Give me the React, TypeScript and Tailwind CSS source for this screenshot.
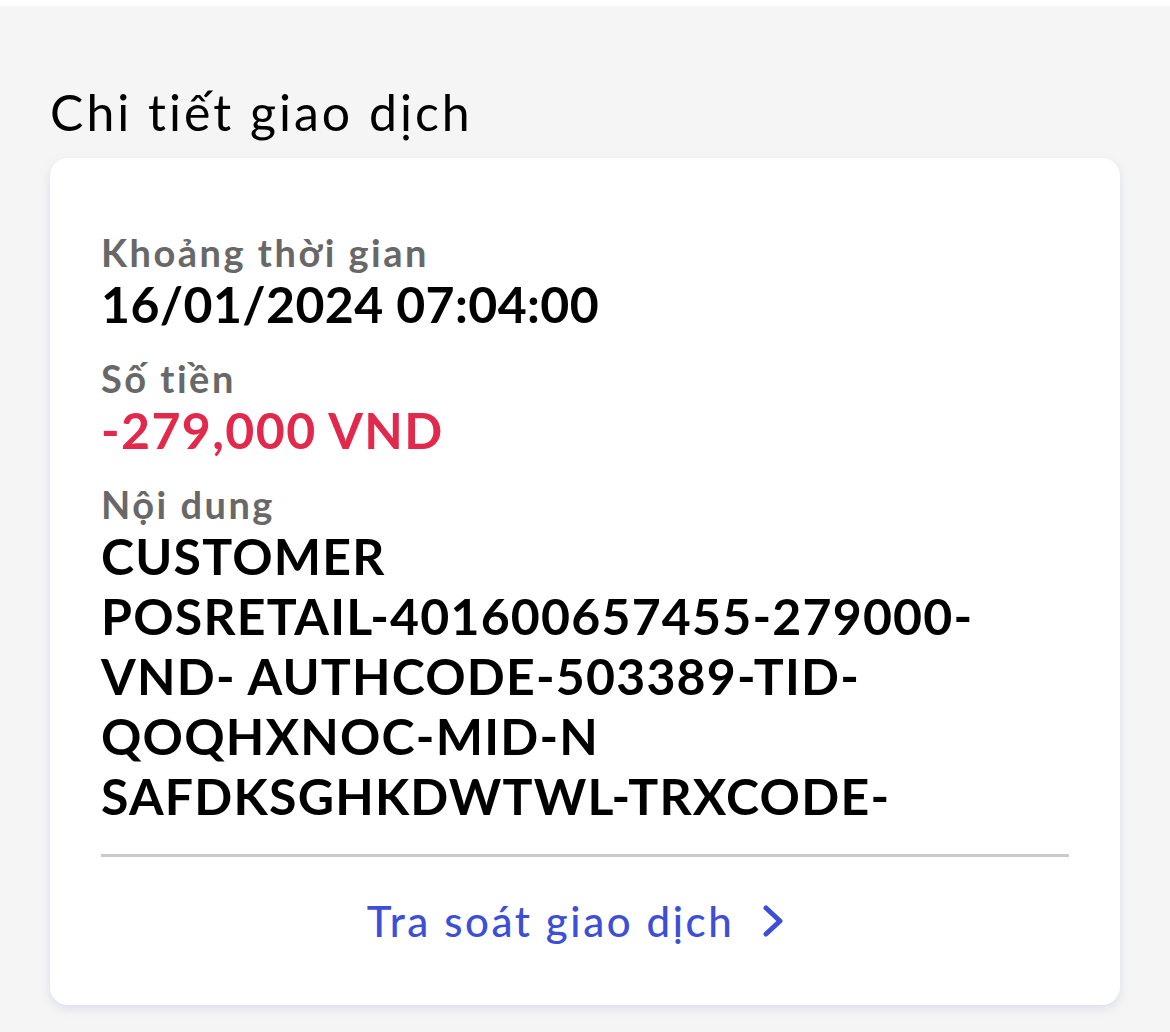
import { FC } from 'react'

const fields = [
  { label: 'Khoảng thời gian', value: '16/01/2024 07:04:00', tone: 'text-black tracking-[0.4px]' },
  { label: 'Số tiền', value: '-279,000 VND', tone: 'text-[#e3294b] tracking-[1.4px]' },
]

const contentLines = [
  'CUSTOMER',
  'POSRETAIL-401600657455-279000-',
  'VND- AUTHCODE-503389-TID-',
  'QOQHXNOC-MID-N',
  'SAFDKSGHKDWTWL-TRXCODE-',
]

const App: FC = () => {
  return (
    <div className="w-[1170px] h-[1032px] bg-[#f5f5f5] border-t-[6px] border-white font-['Lato','Noto_Sans',sans-serif] overflow-hidden">
      {/* Section title */}
      <h1 className="mt-[78px] pl-[50px] text-[50px] leading-[56px] font-normal tracking-[3px] text-black">
        Chi tiết giao dịch
      </h1>

      {/* Detail card */}
      <div className="mt-[18px] mx-[50px] w-[1070px] bg-white rounded-[18px] shadow-[0_4px_10px_rgba(120,140,200,0.2)] px-[51px] pt-[72px] pb-[60px]">
        {fields.map((field) => (
          <div key={field.label} className="mb-[22px]">
            <div className="text-[38px] leading-[44px] font-bold tracking-[2.5px] text-[#686868]">{field.label}</div>
            <div className={`text-[50px] leading-[60px] font-bold ${field.tone}`}>{field.value}</div>
          </div>
        ))}

        <div>
          <div className="text-[38px] leading-[44px] font-bold tracking-[2.5px] text-[#686868]">Nội dung</div>
          {contentLines.map((line) => (
            <div key={line} className="text-[50px] leading-[60px] font-bold tracking-[1.2px] text-black">
              {line}
            </div>
          ))}
        </div>

        <div className="mt-[28px] h-[3px] bg-[#cacaca]" />

        <div className="mt-[40px] flex items-center justify-center gap-[28px] pr-[19px]">
          <span className="text-[42px] leading-[48px] font-medium tracking-[2.6px] text-[#3c4fd6]">Tra soát giao dịch</span>
          <svg width="22" height="32" viewBox="0 0 22 32" fill="none">
            <path d="M4 3 L18 16 L4 29" stroke="#3c4fd6" strokeWidth="5" strokeLinecap="round" strokeLinejoin="round" />
          </svg>
        </div>
      </div>
    </div>
  )
}

export default App
